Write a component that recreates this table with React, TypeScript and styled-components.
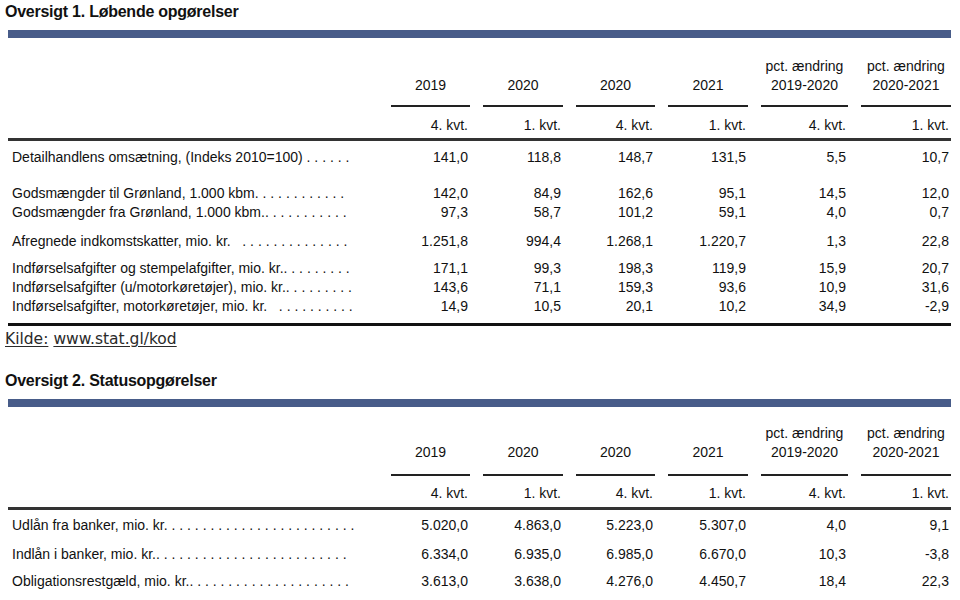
import React from "react";
import styled, { createGlobalStyle } from "styled-components";

const GlobalStyle = createGlobalStyle`
  html, body { margin: 0; padding: 0; background: #ffffff; }
  body { color: #111111; font-family: "Liberation Sans", Arial, Helvetica, sans-serif; }
`;

const Page = styled.div`
  width: 960px;
  height: 600px;
  overflow: hidden;
  padding-top: 2px;
  box-sizing: border-box;
`;

const Title = styled.h2<{ $top?: number }>`
  margin: ${(p) => p.$top ?? 0}px 0 0 5px;
  font-family: "Liberation Sans", Arial, sans-serif;
  font-weight: 700;
  font-size: 16px;
  letter-spacing: -0.25px;
  line-height: 20px;
  color: #111111;
`;

const Section = styled.section`
  margin-left: 8px;
  width: 943px;
`;

const Bar = styled.div`
  margin-top: 8px;
  height: 8px;
  background: #485c89;
`;

const GRID = `
  display: grid;
  grid-template-columns: 370px 79px 80px 79px 80px 87px 90px;
  column-gap: 13px;
`;

const Header = styled.div<{ $padTop: number }>`
  ${GRID}
  padding-top: ${(p) => p.$padTop}px;
  border-bottom: 3px solid #333333;
  font-size: 14px;
  line-height: 19px;
`;

const HeadCell = styled.div<{ $padBottom: number }>`
  align-self: end;
  text-align: center;
  padding-bottom: ${(p) => p.$padBottom}px;
  border-bottom: 2px solid #222222;
`;

const Blank = styled.div``;

const SubCell = styled.div<{ $padTop: number; $padBottom: number }>`
  text-align: right;
  padding: ${(p) => p.$padTop}px 2px ${(p) => p.$padBottom}px 0;
`;

const Body = styled.div<{ $closed?: boolean }>`
  border-bottom: ${(p) => (p.$closed ? "3px solid #111111" : "none")};
  padding-bottom: 7px;
`;

const Row = styled.div<{ $gap: number }>`
  ${GRID}
  margin-top: ${(p) => p.$gap}px;
  font-size: 14px;
  line-height: 19px;
`;

const Label = styled.div`
  padding-left: 4px;
  white-space: pre;
`;

const Value = styled.div`
  text-align: right;
  padding-right: 2px;
`;

const Source = styled.div`
  margin: 4px 0 0 5px;
  font-family: "DejaVu Sans", Verdana, sans-serif;
  font-size: 15.5px;
  line-height: 18px;
  color: #2a2a2a;
  display: flex;
  gap: 5px;
`;

const SourceLink = styled.span`
  text-decoration: underline;
  text-underline-offset: 2px;
`;

type Col = { head: string[]; sub: string };

const columns: Col[] = [
  { head: ["2019"], sub: "4. kvt." },
  { head: ["2020"], sub: "1. kvt." },
  { head: ["2020"], sub: "4. kvt." },
  { head: ["2021"], sub: "1. kvt." },
  { head: ["pct. ændring", "2019-2020"], sub: "4. kvt." },
  { head: ["pct. ændring", "2020-2021"], sub: "1. kvt." },
];

type DataRow = { label: string; values: string[]; gap: number };

const dots = (n: number) => " .".repeat(n);

const table1: DataRow[] = [
  { label: "Detailhandlens omsætning, (Indeks 2010=100)" + dots(6), values: ["141,0", "118,8", "148,7", "131,5", "5,5", "10,7"], gap: 7 },
  { label: "Godsmængder til Grønland, 1.000 kbm." + dots(11), values: ["142,0", "84,9", "162,6", "95,1", "14,5", "12,0"], gap: 17 },
  { label: "Godsmængder fra Grønland, 1.000 kbm.." + dots(10), values: ["97,3", "58,7", "101,2", "59,1", "4,0", "0,7"], gap: 0 },
  { label: "Afregnede indkomstskatter, mio. kr.  " + dots(14), values: ["1.251,8", "994,4", "1.268,1", "1.220,7", "1,3", "22,8"], gap: 10 },
  { label: "Indførselsafgifter og stempelafgifter, mio. kr.." + dots(8), values: ["171,1", "99,3", "198,3", "119,9", "15,9", "20,7"], gap: 8 },
  { label: "Indførselsafgifter (u/motorkøretøjer), mio. kr.." + dots(8), values: ["143,6", "71,1", "159,3", "93,6", "10,9", "31,6"], gap: 0 },
  { label: "Indførselsafgifter, motorkøretøjer, mio. kr.  " + dots(10), values: ["14,9", "10,5", "20,1", "10,2", "34,9", "-2,9"], gap: 0 },
];

const table2: DataRow[] = [
  { label: "Udlån fra banker, mio. kr." + dots(24), values: ["5.020,0", "4.863,0", "5.223,0", "5.307,0", "4,0", "9,1"], gap: 6 },
  { label: "Indlån i banker, mio. kr.." + dots(24), values: ["6.334,0", "6.935,0", "6.985,0", "6.670,0", "10,3", "-3,8"], gap: 10 },
  { label: "Obligationsrestgæld, mio. kr.." + dots(20), values: ["3.613,0", "3.638,0", "4.276,0", "4.450,7", "18,4", "22,3"], gap: 8 },
];

type TableProps = {
  rows: DataRow[];
  headPadTop: number;
  headPadBottom: number;
  subPadTop: number;
  subPadBottom: number;
  closed?: boolean;
};

function StatTable({ rows, headPadTop, headPadBottom, subPadTop, subPadBottom, closed }: TableProps) {
  return (
    <>
      <Header $padTop={headPadTop}>
        <Blank />
        {columns.map((c, i) => (
          <HeadCell key={"h" + i} $padBottom={headPadBottom}>
            {c.head.map((line, j) => (
              <div key={j}>{line}</div>
            ))}
          </HeadCell>
        ))}
        <Blank />
        {columns.map((c, i) => (
          <SubCell key={"s" + i} $padTop={subPadTop} $padBottom={subPadBottom}>
            {c.sub}
          </SubCell>
        ))}
      </Header>
      <Body $closed={closed}>
        {rows.map((r, i) => (
          <Row key={i} $gap={r.gap}>
            <Label>{r.label}</Label>
            {r.values.map((v, j) => (
              <Value key={j}>{v}</Value>
            ))}
          </Row>
        ))}
      </Body>
    </>
  );
}

export default function App() {
  return (
    <>
      <GlobalStyle />
      <Page>
        <Title>Oversigt 1. Løbende opgørelser</Title>
        <Section>
          <Bar />
          <StatTable rows={table1} headPadTop={19} headPadBottom={10} subPadTop={9} subPadBottom={3} closed />
        </Section>
        <Source>
          <SourceLink>Kilde:</SourceLink>
          <SourceLink>www.stat.gl/kod</SourceLink>
        </Source>
        <Title $top={23}>Oversigt 2. Statusopgørelser</Title>
        <Section>
          <Bar />
          <StatTable rows={table2} headPadTop={17} headPadBottom={12} subPadTop={8} subPadBottom={4} />
        </Section>
      </Page>
    </>
  );
}
